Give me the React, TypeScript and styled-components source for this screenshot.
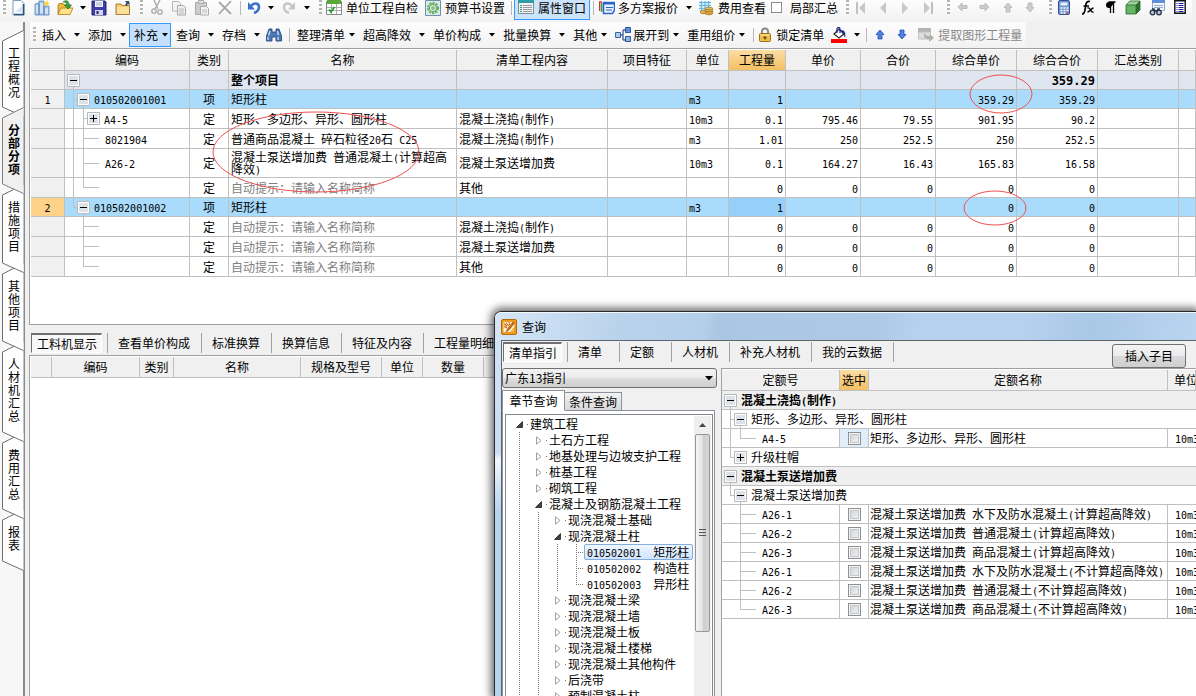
import React from "react";
import styled, { createGlobalStyle, css } from "styled-components";

const LINE = "#c0c0c0";
const SANS = `"Noto Sans CJK SC", "Liberation Sans", sans-serif`;
const MONO = `"DejaVu Sans Mono", "Liberation Mono", monospace`;

const Global = createGlobalStyle`
  *, *::before, *::after { box-sizing: border-box; }
  body { margin: 0; background: #f0f0f0; overflow: hidden; }
  button, select, input { font: inherit; color: inherit; margin: 0; }
  button { border: 0; background: none; padding: 0; text-align: left; white-space: nowrap; }
  svg { display: block; flex: none; }
`;

const Page = styled.div`
  position: relative;
  display: flex;
  flex-direction: column;
  height: 100vh;
  overflow: hidden;
  font: 12px/16px ${SANS};
  color: #000;
`;

/* ---------- text ---------- */

const Half = styled.span<{ $strong?: boolean }>`
  font-family: ${MONO};
  font-size: ${(p) => (p.$strong ? 12 : 10)}px;
  line-height: 0;
  white-space: pre-wrap;
`;

/* Latin runs are set half-width beside the full-width Chinese glyphs. */
function Mixed({ text, strong }: { text: string; strong?: boolean }) {
  return (
    <>
      {text
        .split(/([\x20-\x7e]+)/)
        .filter(Boolean)
        .map((part, i) =>
          /^[\x20-\x7e]/.test(part) ? (
            <Half key={i} $strong={strong}>
              {part}
            </Half>
          ) : (
            <React.Fragment key={i}>{part}</React.Fragment>
          )
        )}
    </>
  );
}

/* ---------- toolbars ---------- */

const ToolbarOne = styled.div`
  display: flex;
  align-items: center;
  height: 22px;
  flex: none;
  padding: 0 0 7px 2px;
  margin-right: 4px;
  background: linear-gradient(#fdfdfd, #f2f2f2);
`;

const ToolbarTwo = styled.div`
  display: flex;
  align-items: center;
  align-self: flex-start;
  height: 26px;
  flex: none;
  padding: 0 4px 1px 3px;
  margin-left: 1px;
  border-radius: 0 3px 3px 0;
  background: linear-gradient(#fdfdfd, #f2f2f2);
`;

const ToolButton = styled.button<{ $ml?: number; $on?: boolean; $off?: boolean }>`
  display: flex;
  align-items: center;
  flex: none;
  height: 24px;
  margin-left: ${(p) => p.$ml ?? 0}px;
  gap: 4px;
  color: ${(p) => (p.$off ? "#888" : "#000")};
  ${(p) =>
    p.$on &&
    css`
      background: #cce4fb;
      border: 1px solid #3399ff;
      padding: 0 3px;
    `}
`;

const Menu = styled.button<{ $split?: boolean; $on?: boolean; $ml?: number }>`
  display: flex;
  align-items: center;
  flex: none;
  height: 24px;
  gap: ${(p) => (p.$split ? 7 : 3)}px;
  padding-right: 8px;
  margin-left: ${(p) => p.$ml ?? 0}px;
  ${(p) =>
    p.$on &&
    css`
      background: #c4e0fc;
      border: 1px solid #3399ff;
      margin: 0 5px 0 -5px;
      padding: 0 2px 0 4px;
    `}
`;

const Sep = styled.span<{ $ml?: number; $tall?: boolean }>`
  flex: none;
  width: 1px;
  height: ${(p) => (p.$tall ? 20 : 14)}px;
  margin-left: ${(p) => p.$ml ?? 0}px;
  background: ${(p) => (p.$tall ? "#a0a0a0" : "#b8b8b8")};
`;

const Grip = styled.span<{ $ml?: number }>`
  flex: none;
  width: 3px;
  height: 15px;
  margin-left: ${(p) => p.$ml ?? 0}px;
  background: repeating-linear-gradient(#b4b4b4 0 2px, transparent 2px 4px);
`;

const TickLabel = styled.label`
  display: flex;
  align-items: center;
  flex: none;
  gap: 8px;
  margin-left: 5px;
`;

const FlatTick = styled.input`
  appearance: none;
  width: 11px;
  height: 11px;
  border: 1px solid #8c8c8c;
  background: #fff;
`;

const Caret = () => (
  <svg width="7" height="4" viewBox="0 0 7 4">
    <path d="M1 0h6L4 3.5z" fill="#000" />
  </svg>
);

const Svg = ({ children, w = 16 }: { children: React.ReactNode; w?: number }) => (
  <svg width={w} height="16" viewBox={`0 0 ${w} 16`} aria-hidden="true">
    {children}
  </svg>
);

const icons = {
  doc: (
    <Svg>
      <path d="M3 .5h8l3 3V15H3z" fill="#fff" stroke="#7c9dbd" />
      <path d="M13.5 4v10.5H4" fill="none" stroke="#28557d" strokeWidth="1.6" />
      <path d="M5 12h7V6z" fill="#d4e4f2" />
    </Svg>
  ),
  building: (
    <Svg>
      <path d="M1 4l4-1v12H1zM5 1h5v14H5zM10 6h5v9h-5z" fill="#a9c6ea" stroke="#5c86bd" strokeWidth=".8" />
      <path d="M2 6h2M2 8h2M2 10h2M2 12h2M6 4h3M6 6h3M6 8h3M6 10h3M6 12h3M11 9h3M11 11h3M11 13h3" stroke="#fff" />
      <path d="M13 0l1 2.5L16 3l-2 1 .5 2.500L12.500 5 10 6l1-2.200L9.500 2l2.500.2z" fill="#ffd23d" />
    </Svg>
  ),
  open: (
    <Svg>
      <path d="M1 14V5l1-1.500h4L7 5h6v9z" fill="#eebb3f" stroke="#a6701a" strokeWidth=".8" />
      <path d="M1 14.500L4 8h12l-3 6.500z" fill="#ffe28a" stroke="#b07a20" strokeWidth=".8" />
      <path d="M6 2c3-2.500 6-1.500 6 3h2.500L11 9 7.500 5H10C9.500 2.500 8 2 6 2z" fill="#38a838" stroke="#176817" strokeWidth=".6" />
    </Svg>
  ),
  save: (
    <Svg>
      <path d="M1 1h13l1 1v13H1z" fill="#3d3dae" stroke="#22226e" />
      <path d="M4 1h8v6H4z" fill="#f3f3fb" />
      <path d="M5 3h6M5 5h6" stroke="#a8a8c8" />
      <path d="M4 10h8v5H4z" fill="#d5d5ea" />
      <path d="M5.500 11h2v3h-2z" fill="#22226e" />
    </Svg>
  ),
  folder: (
    <Svg>
      <path d="M1 14.500V4h5l1 1.500h7.500v9z" fill="#f2cd72" stroke="#9b7430" strokeWidth=".9" />
      <path d="M2 7h12v7H2z" fill="#fbe09a" />
      <path d="M10 1h4l1 4-2-1-1.500 2L10 4.500 11.500 3z" fill="#3b4c68" />
    </Svg>
  ),
  cut: (
    <Svg w={14}>
      <path d="M4 0l4 9M10 0L5 9" stroke="#a9a9a9" strokeWidth="1.400" />
      <circle cx="4" cy="11" r="2.200" fill="none" stroke="#a9a9a9" strokeWidth="1.300" />
      <circle cx="10" cy="12" r="2.200" fill="none" stroke="#a9a9a9" strokeWidth="1.300" />
    </Svg>
  ),
  copy: (
    <Svg>
      <path d="M1.500 1.500h6l2 2V11h-8z" fill="#f4f4f4" stroke="#b4b4b4" />
      <path d="M6.500 5.500h6l2 2V15h-8z" fill="#ededed" stroke="#a8a8a8" />
      <path d="M8 9h5M8 11h5M8 13h5" stroke="#bbb" />
    </Svg>
  ),
  paste: (
    <Svg>
      <path d="M1.500 2.500h11v12h-11z" fill="#ccc" stroke="#aaa" />
      <path d="M4.500.5h5v3h-5z" fill="#e2e2e2" stroke="#aaa" />
      <path d="M6.500 6.500h6l2 2V15h-8z" fill="#f2f2f2" stroke="#aaa" />
      <path d="M8 10h5M8 12h5" stroke="#bbb" />
    </Svg>
  ),
  del: (
    <Svg w={14}>
      <path d="M1 2l12 12M13 1L1 14" stroke="#a6a6a6" strokeWidth="1.800" />
    </Svg>
  ),
  undo: (
    <Svg w={14}>
      <path d="M4 6c3-4 8-3 8 1 0 3-2 5-5 6" fill="none" stroke="#3970c8" strokeWidth="2.600" />
      <path d="M1 2v7.500h7z" fill="#3970c8" />
    </Svg>
  ),
  redo: (
    <Svg w={14}>
      <path d="M10 6C7 2 2 3 2 7c0 3 2 5 5 6" fill="none" stroke="#c6c6c6" strokeWidth="2.400" />
      <path d="M13 2v7.500H6z" fill="#c6c6c6" />
    </Svg>
  ),
  check: (
    <Svg>
      <path d="M.5 1.500h15v13H.5z" fill="#fff" stroke="#888" />
      <path d="M1 0h14v4H1z" fill="#5aa83a" />
      <path d="M1 7.500h14M1 10.500h14M5.500 4v10M10.500 4v10" stroke="#aaa" />
      <path d="M3 9.500l2 2.500 3.500-5" fill="none" stroke="#23a02a" strokeWidth="1.800" />
    </Svg>
  ),
  gear: (
    <Svg>
      <path d="M.5.5h15v15H.5z" fill="#dcebe8" stroke="#6f8fae" />
      <circle cx="8" cy="8" r="5" fill="none" stroke="#5fae5f" strokeWidth="2" strokeDasharray="2.200 1" />
      <circle cx="8" cy="8" r="3.500" fill="#eef8ee" stroke="#4d9d4d" />
      <circle cx="8" cy="8" r="1.300" fill="none" stroke="#4d9d4d" />
    </Svg>
  ),
  props: (
    <Svg>
      <path d="M.5.5h15v13H.5z" fill="#f4f4f4" stroke="#7b8e9e" />
      <path d="M0 0h16v3H0z" fill="#2f9ca6" />
      <path d="M2 5.500h2M2 7.500h2M2 9.500h2M2 11.500h2" stroke="#3f8f5f" />
      <path d="M5 5.500h9M5 7.500h9M5 9.500h9M5 11.500h9" stroke="#9a9a9a" />
    </Svg>
  ),
  plans: (
    <Svg>
      <path d="M.7 2v9M0 2h3" stroke="#e03030" strokeWidth="1.400" />
      <path d="M2.700 3v9" stroke="#2aa84a" strokeWidth="1.400" />
      <path d="M4.500 2.500h11v8l-2 3h-9z" fill="#e8f1ff" stroke="#2c63c9" strokeWidth="1.500" />
      <path d="M4 2h12v2.500H4z" fill="#2c63c9" />
      <path d="M7 7.500h7M7 10h6" stroke="#2c63c9" />
    </Svg>
  ),
  cost: (
    <Svg>
      <path d="M1 1h12v10H1z" fill="#d6eefa" />
      <path d="M1 2.500h12M1 5.500h12M1 8.500h8M3.500 1v10M7 1v9M10.500 1v7" stroke="#6cb8dc" strokeWidth="1.200" />
      <ellipse cx="11" cy="9" rx="4" ry="1.800" fill="#f0c55a" stroke="#9c7022" strokeWidth=".7" />
      <ellipse cx="6" cy="12" rx="4" ry="1.800" fill="#e6b548" stroke="#9c7022" strokeWidth=".7" />
      <ellipse cx="11" cy="11" rx="4" ry="1.800" fill="#e6b548" stroke="#9c7022" strokeWidth=".7" />
      <ellipse cx="11" cy="13" rx="4" ry="1.800" fill="#d9a23a" stroke="#9c7022" strokeWidth=".7" />
    </Svg>
  ),
  first: (
    <Svg w={10}>
      <path d="M1 2v12" stroke="#c0c0c0" strokeWidth="2" />
      <path d="M9 2L3 8l6 6z" fill="#c8c8c8" />
    </Svg>
  ),
  prev: (
    <Svg w={8}>
      <path d="M7 2v12L1 8z" fill="#c8c8c8" />
    </Svg>
  ),
  next: (
    <Svg w={8}>
      <path d="M1 2v12l6-6z" fill="#c8c8c8" />
    </Svg>
  ),
  last: (
    <Svg w={10}>
      <path d="M9 2v12" stroke="#c0c0c0" strokeWidth="2" />
      <path d="M1 2l6 6-6 6z" fill="#c8c8c8" />
    </Svg>
  ),
  calc: (
    <Svg>
      <rect x="2.500" y=".5" width="11" height="14" rx="1.500" fill="#6f94cf" stroke="#31538f" />
      <path d="M4.500 2.500h7v3h-7z" fill="#e9f2ff" />
      <path d="M4.500 8h2M7.500 8h2M10.500 8h2M4.500 10.500h2M7.500 10.500h2M10.500 10.500h2M4.500 13h2M7.500 13h2" stroke="#fff" strokeWidth="1.500" />
      <path d="M10.500 13h2" stroke="#e0503a" strokeWidth="1.500" />
    </Svg>
  ),
  fx: (
    <Svg w={14}>
      <path d="M1 14c2 0 2.500-1 3-4l1-6c.4-2 1.500-3 4-2.500M2.500 6H8" fill="none" stroke="#000" strokeWidth="1.600" />
      <path d="M6.500 8c2-.5 2 0 3 2s1.500 2.500 3 2M12.500 8c-2 0-4 4-6 4" fill="none" stroke="#000" strokeWidth="1.400" />
    </Svg>
  ),
  para: (
    <Svg w={12}>
      <path d="M11 2H5a3 3 0 0 0 0 6h1z" fill="#000" />
      <path d="M6.500 2v11M9.500 2v11M4.500 2h7" stroke="#000" strokeWidth="1.300" />
    </Svg>
  ),
  cube: (
    <Svg>
      <path d="M1 5l4-4h10l-4 4z" fill="#9ad69a" />
      <path d="M1 5h10v9H1z" fill="#66b566" />
      <path d="M11 5l4-4v9l-4 4z" fill="#2f702f" />
      <path d="M1 5h10v9H1zM1 5l4-4h10v9l-4 4M11 5l4-4" fill="none" stroke="#2b632b" strokeWidth=".8" />
    </Svg>
  ),
  find: (
    <Svg>
      <path d="M3.500.5h12v10h-12z" fill="#f3f8ff" stroke="#8fa8cc" />
      <path d="M3 0h13v3H3z" fill="#5f8fd6" />
      <path d="M5 5.500h9M5 7.500h9" stroke="#93acd1" />
      <circle cx="3.500" cy="12.500" r="2.300" fill="#b9c7d8" stroke="#222f45" strokeWidth="1.300" />
      <circle cx="10" cy="12.500" r="2.300" fill="#b9c7d8" stroke="#222f45" strokeWidth="1.300" />
      <path d="M3 9h2l1 2h2l1-2h2" fill="none" stroke="#222f45" strokeWidth="1.500" />
    </Svg>
  ),
  list: (
    <Svg w={12}>
      <path d="M.8.8h10.400v12.400H.8z" fill="#fff" stroke="#111" strokeWidth="1.400" />
      <path d="M2.500 3.500h1M2.500 5.500h1M2.500 7.500h1M2.500 9.500h1M2.500 11.500h1M4.500 3.500h5M4.500 5.500h5M4.500 7.500h5M4.500 9.500h5M4.500 11.500h5" stroke="#1c1c9c" />
    </Svg>
  ),
  binoculars: (
    <Svg>
      <path d="M3 2h3v3h4V2h3l2.500 7v5H10v-4H6v4H.5V9z" fill="#4f79b4" stroke="#294a7c" strokeWidth=".9" />
      <path d="M2.500 8.500L4 4M11.500 4l1 4M2 10v3M12 10v3" stroke="#c9dcf5" strokeWidth="1.300" />
    </Svg>
  ),
  expand: (
    <Svg>
      <path d="M5 8h3M8 3v10M8 3h3M8 13h3" fill="none" stroke="#3f5f94" strokeWidth="1.300" />
      <path d="M.5 5.500h5v5h-5z" fill="#aac8f0" stroke="#3f67a8" />
      <path d="M10.500.5h5v5h-5z" fill="#5e8fd8" stroke="#2f559a" />
      <path d="M10.500 9.500h5v5h-5z" fill="#8fb4e8" stroke="#2f559a" />
    </Svg>
  ),
  lock: (
    <Svg w={14}>
      <path d="M4 7V4.500a3 3 0 0 1 6 0V7" fill="none" stroke="#8c8c8c" strokeWidth="2" />
      <rect x="1.500" y="6.500" width="11" height="8" rx="1" fill="#efbf4a" stroke="#9b6f1b" />
      <path d="M2.500 8h9" stroke="#ffe9a8" />
      <path d="M7 9.500v3M5.500 10.500h3" stroke="#5d400c" strokeWidth="1.300" />
    </Svg>
  ),
  bucket: (
    <Svg>
      <path d="M3 7l5-5 5 5-5 4z" fill="#fff" stroke="#222" strokeWidth="1.200" />
      <path d="M6 6V2a1.500 1.500 0 0 1 3 0v4" fill="none" stroke="#1c1c8c" strokeWidth="1.200" />
      <path d="M10 3c4 0 5 3 4 8-1-3-1.500-4-3-5z" fill="#1c2c9c" />
      <path d="M0 12h16v4H0z" fill="#f00" />
    </Svg>
  ),
  extract: (
    <Svg>
      <path d="M0 1h13v4H0z" fill="#b4b4b4" />
      <path d="M.5 5h12v7H.5z" fill="#dcdcdc" stroke="#c0c0c0" />
      <path d="M6 8c0 3 2 4 5 4v3l5-4-4-4v2c-3 0-4 0-5-3z" fill="#b0b0b0" />
    </Svg>
  ),
};

const ARROWS = {
  left: "M1 5l4-4v2.500h5v3H5V9z",
  right: "M10 5L6 1v2.500H1v3h5V9z",
  up: "M5 1l4 4.500H7V10H3V5.500H1z",
  down: "M5 10L1 5.500h2V1h4v4.500h2z",
};

const Arrow = ({ dir, blue }: { dir: keyof typeof ARROWS; blue?: boolean }) => (
  <svg width="11" height="11" viewBox="0 0 11 11" aria-hidden="true">
    <path d={ARROWS[dir]} fill={blue ? "#4d80e0" : "#ccc"} stroke={blue ? "#2450b0" : "#b2b2b2"} strokeWidth=".8" />
  </svg>
);

function Tool({ icon, ml, label }: { icon: React.ReactNode; ml: number; label: string }) {
  return (
    <ToolButton $ml={ml} aria-label={label}>
      {icon}
    </ToolButton>
  );
}

function TopToolbar() {
  return (
    <ToolbarOne>
      <Grip $ml={1} />
      <Tool icon={icons.doc} ml={4} label="新建" />
      <Tool icon={icons.building} ml={8} label="新建项目" />
      <Tool icon={icons.open} ml={7} label="打开" />
      <Tool icon={<Caret />} ml={6} label="最近文件" />
      <Tool icon={icons.save} ml={5} label="保存" />
      <Tool icon={icons.folder} ml={8} label="目录" />
      <Grip $ml={9} />
      <Tool icon={icons.cut} ml={7} label="剪切" />
      <Tool icon={icons.copy} ml={7} label="复制" />
      <Tool icon={icons.paste} ml={7} label="粘贴" />
      <Tool icon={icons.del} ml={8} label="删除" />
      <Sep $ml={8} />
      <Tool icon={icons.undo} ml={6} label="撤销" />
      <Tool icon={<Caret />} ml={6} label="撤销列表" />
      <Tool icon={icons.redo} ml={8} label="重做" />
      <Tool icon={<Caret />} ml={7} label="重做列表" />
      <Grip $ml={9} />
      <ToolButton $ml={4}>
        {icons.check}单位工程自检
      </ToolButton>
      <ToolButton $ml={7}>
        {icons.gear}预算书设置
      </ToolButton>
      <Sep $ml={6} />
      <ToolButton $ml={2} $on>
        {icons.props}属性窗口
      </ToolButton>
      <Sep $ml={3} />
      <ToolButton $ml={5} aria-label="报价方案">
        {icons.plans}
      </ToolButton>
      <Menu $split $ml={3}>
        多方案报价
        <Caret />
      </Menu>
      <ToolButton $ml={-2}>
        {icons.cost}费用查看
      </ToolButton>
      <TickLabel>
        <FlatTick type="checkbox" />
        局部汇总
      </TickLabel>
      <Grip $ml={8} />
      <Tool icon={icons.first} ml={7} label="第一条" />
      <Tool icon={icons.prev} ml={13} label="上一条" />
      <Tool icon={icons.next} ml={14} label="下一条" />
      <Tool icon={icons.last} ml={14} label="最后一条" />
      <Grip $ml={14} />
      <Tool icon={<Arrow dir="left" />} ml={7} label="升级" />
      <Tool icon={<Arrow dir="right" />} ml={11} label="降级" />
      <Tool icon={<Arrow dir="up" />} ml={13} label="上移" />
      <Tool icon={<Arrow dir="down" />} ml={11} label="下移" />
      <Grip $ml={13} />
      <Tool icon={icons.calc} ml={4} label="计算器" />
      <Tool icon={icons.fx} ml={9} label="公式" />
      <Tool icon={icons.para} ml={9} label="特殊符号" />
      <Tool icon={icons.cube} ml={9} label="图元公式" />
      <Tool icon={icons.find} ml={8} label="查找" />
      <Tool icon={icons.list} ml={9} label="列表" />
    </ToolbarOne>
  );
}

function EditToolbar() {
  return (
    <ToolbarTwo>
      <Grip />
      {["插入", "添加"].map((t, i) => (
        <Menu key={t} $split $ml={i ? 0 : 6}>
          {t}
          <Caret />
        </Menu>
      ))}
      <Menu $on>
        补充
        <Caret />
      </Menu>
      {["查询", "存档"].map((t) => (
        <Menu key={t} $split>
          {t}
          <Caret />
        </Menu>
      ))}
      <Tool icon={icons.binoculars} ml={-2} label="查找" />
      <Sep $ml={7} />
      <Menu $ml={7}>
        整理清单
        <Caret />
      </Menu>
      {["超高降效", "单价构成", "批量换算"].map((t) => (
        <Menu key={t} $split>
          {t}
          <Caret />
        </Menu>
      ))}
      <Menu>
        其他
        <Caret />
      </Menu>
      {icons.expand}
      <Menu $ml={2}>
        展开到
        <Caret />
      </Menu>
      <Menu>
        重用组价
        <Caret />
      </Menu>
      <Sep />
      <ToolButton $ml={4}>
        {icons.lock}锁定清单
      </ToolButton>
      <Tool icon={icons.bucket} ml={7} label="颜色" />
      <Tool icon={<Caret />} ml={6} label="颜色列表" />
      <Sep $ml={6} />
      <Tool icon={<Arrow dir="up" blue />} ml={8} label="上移" />
      <Tool icon={<Arrow dir="down" blue />} ml={11} label="下移" />
      <ToolButton $ml={10} $off>
        {icons.extract}提取图形工程量
      </ToolButton>
    </ToolbarTwo>
  );
}

/* ---------- side tabs ---------- */

const Body = styled.div`
  display: flex;
  flex: 1;
  min-height: 0;
`;

const Side = styled.nav`
  display: flex;
  flex-direction: column;
  flex: none;
  width: 25px;
  margin-right: 4px;
  padding-top: 8px;
  border-right: 2px solid #8a8a8a;
  background: #f7f7f7;
`;

const SideTab = styled.button<{ $h: number; $z: number; $on?: boolean }>`
  display: grid;
  flex: none;
  position: relative;
  z-index: ${(p) => p.$z};
  height: ${(p) => p.$h + 10}px;
  margin-bottom: -10px;
  white-space: normal;
  font-weight: ${(p) => (p.$on ? 700 : 400)};
  > * {
    grid-area: 1 / 1;
  }
`;

const SideText = styled.span`
  width: 12px;
  margin: 16px 0 0 8px;
  line-height: 13px;
  word-break: break-all;
`;

const SIDE: [string, number][] = [
  ["工程概况", 77],
  ["分部分项", 77],
  ["措施项目", 79],
  ["其他项目", 78],
  ["人材机汇总", 91],
  ["费用汇总", 77],
  ["报表", 52],
];

function SideTabs() {
  return (
    <Side>
      {SIDE.map(([name, h], i) => {
        const on = i === 1;
        return (
          <SideTab key={name} $h={h} $z={on ? 9 : 8 - i} $on={on}>
            <svg width="25" height={h + 10} viewBox={`0 0 25 ${h + 10}`}>
              <path
                d={`M23.500 .5L2.500 11V${h}L23.500 ${h + 9.5}`}
                fill={on ? "#f0f0f0" : "#fff"}
                stroke={on ? "#808080" : "#6e6e6e"}
              />
            </svg>
            <SideText>{name}</SideText>
          </SideTab>
        );
      })}
    </Side>
  );
}

/* ---------- tables ---------- */

const Main = styled.main`
  display: flex;
  flex-direction: column;
  flex: 1;
  min-width: 0;
`;

const GridFrame = styled.section<{ $grow?: boolean }>`
  position: relative;
  flex: ${(p) => (p.$grow ? 1 : "none")};
  min-height: 0;
  padding: 1px 0 ${(p) => (p.$grow ? 0 : 47)}px 1px;
  border: 1px solid #a0a0a0;
  border-right: 0;
  border-bottom-width: ${(p) => (p.$grow ? 0 : 1)}px;
  background: #fff;
`;

const Table = styled.table`
  width: 100%;
  table-layout: fixed;
  border-collapse: separate;
  border-spacing: 0;
`;

const Th = styled.th<{ $hot?: boolean }>`
  height: 21px;
  padding: 0;
  overflow: hidden;
  font-weight: 400;
  white-space: nowrap;
  border: solid ${LINE};
  border-width: 0 1px 1px 0;
  background: ${(p) => (p.$hot ? "linear-gradient(#fbdda5, #f3bf62)" : "#f0f0f0")};
`;

type Tone = "total" | "item" | "plain";
const TONES: Record<Tone, string> = { total: "#dfe6f0", item: "#a8dbfc", plain: "#fff" };

const Tr = styled.tr<{ $tone: Tone; $h: number }>`
  height: ${(p) => p.$h}px;
  background: ${(p) => TONES[p.$tone]};
  font-weight: ${(p) => (p.$tone === "total" ? 700 : 400)};
`;

const Td = styled.td<{ $align?: string; $hint?: boolean; $bg?: string; $wide?: boolean }>`
  padding: 0 ${(p) => (p.$align === "right" ? 2 : 0)}px 0 ${(p) => (p.$align ? 0 : 2)}px;
  line-height: 12px;
  text-align: ${(p) => p.$align ?? "left"};
  color: ${(p) => (p.$hint ? "#808080" : "inherit")};
  background: ${(p) => p.$bg ?? "transparent"};
  border: solid ${LINE};
  border-width: 0 ${(p) => (p.$wide ? 0 : 1)}px 1px 0;
`;

const TreeTd = styled(Td)`
  padding-left: 2px;
`;

/* ---------- tree cell shared by both tables ---------- */

const Branch = styled.div<{ $h: number }>`
  display: flex;
  align-items: center;
  height: ${(p) => p.$h - 1}px;
  white-space: nowrap;
`;

type Slot = "none" | "line" | "tee" | "end";
const v = `linear-gradient(${LINE}, ${LINE})`;

const Guide = styled.span<{ $kind: Slot }>`
  flex: none;
  align-self: stretch;
  width: 10px;
  background-repeat: no-repeat;
  background-image: ${(p) => (p.$kind === "none" ? "none" : p.$kind === "line" ? v : `${v}, ${v}`)};
  background-size: 1px ${(p) => (p.$kind === "end" ? "50%" : "100%")}, 4px 1px;
  background-position: 6px 0, 6px 50%;
`;

const Stem = styled.span`
  flex: none;
  width: 12px;
  height: 1px;
  margin-right: 6px;
  background: ${LINE};
`;

const Knob = styled.span<{ $down?: boolean }>`
  display: flex;
  align-items: center;
  flex: none;
  align-self: stretch;
  width: 13px;
  margin-right: 4px;
  background: ${(p) => (p.$down ? v : "none")} no-repeat 6px 100% / 1px 50%;
`;

function Expander({ sign }: { sign: "+" | "-" }) {
  return (
    <Knob $down={sign === "-"}>
      <button aria-label={sign === "+" ? "展开" : "折叠"}>
        <svg width="13" height="13" viewBox="0 0 13 13">
          <path d="M.5.5h12v12H.5z" fill="#fff" stroke="#b8b8b8" />
          <path d="M2 2h9v9H2z" fill="#dde1e8" />
          <path d={sign === "+" ? "M3 6.500h7M6.500 3v7" : "M3 6.500h7"} stroke="#000" />
        </svg>
      </button>
    </Knob>
  );
}

function Tree({ h, guides, sign, text }: { h: number; guides: Slot[]; sign?: "+" | "-"; text: string }) {
  return (
    <Branch $h={h}>
      {guides.map((g, i) => (
        <Guide key={i} $kind={g} />
      ))}
      {sign ? <Expander sign={sign} /> : <Stem />}
      <span>
        <Mixed text={text} />
      </span>
    </Branch>
  );
}

/* ---------- bill of quantities ---------- */

const COLS: [string, number?][] = [
  ["", 34], ["编码", 125], ["类别", 39], ["名称", 228], ["清单工程内容", 151], ["项目特征", 79], ["单位", 42],
  ["工程量", 57], ["单价", 75], ["合价", 75], ["综合单价", 81], ["综合合价", 81], ["汇总类别", 81], [""],
];

type Row = {
  h: number; tone: Tone; no?: string; guides: Slot[]; sign?: "+" | "-"; code: string; kind: string;
  name: string; work: string; unit: string; nums: string[]; active?: boolean;
};

const HINT = "自动提示：请输入名称简称";
const ZERO = ["0", "0", "0", "0", "0"];

const ROWS: Row[] = [
  { h: 19, tone: "total", guides: [], sign: "-", code: "", kind: "", name: "整个项目", work: "", unit: "", nums: ["", "", "", "", "359.29"] },
  { h: 19, tone: "item", no: "1", guides: ["tee"], sign: "-", code: "010502001001", kind: "项", name: "矩形柱", work: "", unit: "m3", nums: ["1", "", "", "359.29", "359.29"] },
  { h: 20, tone: "plain", guides: ["line", "tee"], sign: "+", code: "A4-5", kind: "定", name: "矩形、多边形、异形、圆形柱", work: "混凝土浇捣(制作)", unit: "10m3", nums: ["0.1", "795.46", "79.55", "901.95", "90.2"] },
  { h: 20, tone: "plain", guides: ["line", "tee"], code: "8021904", kind: "定", name: "普通商品混凝土 碎石粒径20石 C25", work: "混凝土浇捣(制作)", unit: "m3", nums: ["1.01", "250", "252.5", "250", "252.5"] },
  { h: 29, tone: "plain", guides: ["line", "tee"], code: "A26-2", kind: "定", name: "混凝土泵送增加费 普通混凝土(计算超高降效)", work: "混凝土泵送增加费", unit: "10m3", nums: ["0.1", "164.27", "16.43", "165.83", "16.58"] },
  { h: 20, tone: "plain", guides: ["line", "end"], code: "", kind: "定", name: HINT, work: "其他", unit: "", nums: ZERO },
  { h: 19, tone: "item", no: "2", guides: ["end"], sign: "-", code: "010502001002", kind: "项", name: "矩形柱", work: "", unit: "m3", nums: ["1", "", "", "0", "0"], active: true },
  { h: 20, tone: "plain", guides: ["none", "tee"], code: "", kind: "定", name: HINT, work: "混凝土浇捣(制作)", unit: "", nums: ZERO },
  { h: 20, tone: "plain", guides: ["none", "tee"], code: "", kind: "定", name: HINT, work: "混凝土泵送增加费", unit: "", nums: ZERO },
  { h: 20, tone: "plain", guides: ["none", "end"], code: "", kind: "定", name: HINT, work: "其他", unit: "", nums: ZERO },
];

const Marks = styled.svg`
  position: absolute;
  left: 0;
  top: 0;
  pointer-events: none;
`;

function BillGrid() {
  return (
    <GridFrame>
      <Table>
        <colgroup>
          {COLS.map(([, w], i) => (
            <col key={i} width={w} />
          ))}
        </colgroup>
        <thead>
          <tr>
            {COLS.map(([t], i) => (
              <Th key={i} $hot={t === "工程量"}>
                {t}
              </Th>
            ))}
          </tr>
        </thead>
        <tbody>
          {ROWS.map((r, i) => (
            <Tr key={i} $tone={r.tone} $h={r.h}>
              <Td $align="center" $bg={r.active ? "#ffd28a" : "#f0f0f0"}>
                <Mixed text={r.no ?? ""} />
              </Td>
              <TreeTd>
                <Tree h={r.h} guides={r.guides} sign={r.sign} text={r.code} />
              </TreeTd>
              <Td $align="center">{r.kind}</Td>
              <Td $hint={r.name === HINT}>
                <Mixed text={r.name} />
              </Td>
              <Td>
                <Mixed text={r.work} />
              </Td>
              <Td />
              <Td>
                <Mixed text={r.unit} />
              </Td>
              {r.nums.map((n, k) => (
                <Td key={k} $align="right" $bg={r.active && k === 0 ? "#96cffa" : undefined}>
                  <Mixed text={n} strong={r.tone === "total"} />
                </Td>
              ))}
              <Td />
              <Td />
            </Tr>
          ))}
        </tbody>
      </Table>
      <Marks width="1020" height="190" viewBox="0 0 1020 190" fill="none" stroke="#f05050">
        <ellipse cx="286" cy="103" rx="103" ry="40" />
        <ellipse cx="971" cy="45" rx="31" ry="19" />
        <ellipse cx="965" cy="159" rx="31" ry="17" />
      </Marks>
    </GridFrame>
  );
}

/* ---------- flat tab strips ---------- */

const Strip = styled.div<{ $pad: string }>`
  display: flex;
  flex: none;
  align-items: center;
  padding: ${(p) => p.$pad};
`;

const StripTab = styled.button<{ $on?: boolean }>`
  flex: none;
  min-width: 52px;
  height: 20px;
  line-height: 18px;
  ${(p) =>
    p.$on
      ? css`
          padding: 1px 4px 0 5px;
          margin-right: 5px;
          border: 1px solid #fff;
          border-top: 2px solid #707070;
          border-left: 1px solid #707070;
          line-height: 16px;
          background: #f8f8f8;
        `
      : css`
          padding: 0 11px 0 10px;
        `}
  & + & {
    border-left: 1px solid #a0a0a0;
  }
`;

const LOWER: [string, number?][] = [
  ["", 21], ["编码", 88], ["类别", 34], ["名称", 127], ["规格及型号", 81], ["单位", 41], ["数量", 61], [""],
];

function LowerPane() {
  return (
    <>
      <Strip $pad="8px 0 2px 2px">
        {["工料机显示", "查看单价构成", "标准换算", "换算信息", "特征及内容", "工程量明细"].map((t, i) => (
          <StripTab key={t} $on={i === 0}>
            {t}
          </StripTab>
        ))}
      </Strip>
      <GridFrame $grow>
        <Table>
          <colgroup>
            {LOWER.map(([, w], i) => (
              <col key={i} width={w} />
            ))}
          </colgroup>
          <thead>
            <tr>
              {LOWER.map(([t], i) => (
                <Th key={i}>{t}</Th>
              ))}
            </tr>
          </thead>
        </Table>
      </GridFrame>
    </>
  );
}

/* ---------- query window ---------- */

const Win = styled.section`
  position: absolute;
  z-index: 20;
  left: 494px;
  right: 0;
  top: 311px;
  bottom: 0;
  display: flex;
  flex-direction: column;
  padding-left: 6px;
  border: solid #26282b;
  border-width: 1px 0 0 1px;
  border-radius: 7px 0 0 0;
  background: linear-gradient(#d3e4f5, #c9dcf2 140px, #f0f6fc 148px, #b7d3ee 200px);
  box-shadow: 0 0 9px 3px rgba(0, 0, 0, 0.6);
`;

const Title = styled.header`
  display: flex;
  align-items: center;
  flex: none;
  gap: 5px;
  height: 28px;
  margin-left: -6px;
  padding-left: 6px;
  border-top: 1px solid #f2f8fe;
  border-radius: 6px 0 0 0;
  background: linear-gradient(100deg, #d6e6f6, #b9d2ec 18%, #b4cfea 30%, #a9c6e2 32%, #adc9e5 55%, #b5d1ee 60%, #b5d1ee 75%, #a9c8e6 85%, #b9d5f0);
`;

const Client = styled.div`
  display: flex;
  flex-direction: column;
  flex: 1;
  min-height: 0;
  border: solid #5c6570;
  border-width: 1px 0 0 1px;
  background: #f0f0f0;
`;

const TopRow = styled.div`
  display: flex;
  flex: none;
  height: 27px;
`;

const RoundButton = styled.button`
  align-self: flex-end;
  margin-left: auto;
  margin-right: 10px;
  height: 24px;
  width: 74px;
  text-align: center;
  border: 1px solid #707070;
  border-radius: 3px;
  background: linear-gradient(#f4f4f4, #ebebeb 50%, #dadada 50%, #cfcfcf);
`;

const Panes = styled.div`
  display: flex;
  flex: 1;
  min-height: 0;
  gap: 4px;
`;

const LeftPane = styled.div`
  display: flex;
  flex-direction: column;
  flex: none;
  width: 215px;
`;

const Picker = styled.div`
  display: grid;
  align-items: center;
  flex: none;
  > * {
    grid-area: 1 / 1;
  }
  > svg {
    justify-self: end;
    margin-right: 4px;
    pointer-events: none;
  }
`;

const Select = styled.select`
  appearance: none;
  width: 100%;
  height: 20px;
  padding: 0 2px;
  border: 1px solid #707070;
  border-radius: 3px;
  background: linear-gradient(#f2f2f2, #ebebeb 50%, #dddddd 50%, #cfcfcf);
`;

const PageTabs = styled.div`
  display: flex;
  align-items: flex-end;
  flex: none;
  height: 23px;
  margin-bottom: -1px;
  position: relative;
`;

const PageTab = styled.button<{ $on?: boolean }>`
  height: ${(p) => (p.$on ? 21 : 19)}px;
  width: ${(p) => (p.$on ? 63 : 57)}px;
  text-align: center;
  border: 1px solid #8d919c;
  border-bottom-color: ${(p) => (p.$on ? "#fff" : "#8d919c")};
  border-left-width: ${(p) => (p.$on ? 1 : 0)}px;
  background: ${(p) => (p.$on ? "#fff" : "linear-gradient(#f2f2f2, #d8d8d8)")};
`;

const TabBody = styled.div`
  display: flex;
  flex: 1;
  min-height: 0;
  width: 213px;
  padding: 3px 1px 0 2px;
  border: 1px solid #8d919c;
  border-bottom: 0;
  background: #fff;
`;

const TreeFrame = styled.div`
  display: flex;
  flex: 1;
  min-width: 0;
  border: 1px solid #828790;
  border-bottom: 0;
`;

const TreeList = styled.div`
  flex: 1;
  min-width: 0;
  padding: 1px 0 0 5px;
  overflow: hidden;
`;

const TreeRow = styled.div`
  display: flex;
  align-items: center;
  height: 16px;
  white-space: nowrap;
`;

const dots = "repeating-linear-gradient(#777 0 1px, transparent 1px 2px)";
const hdots = "repeating-linear-gradient(90deg, #777 0 1px, transparent 1px 2px)";
const dot = "linear-gradient(#777, #777)";

const Indent = styled.span<{ $kind: "line" | "tee" | "end" | "knob" }>`
  display: flex;
  align-items: center;
  flex: none;
  align-self: stretch;
  width: 19px;
  padding-left: 5px;
  background-repeat: no-repeat;
  background-image: ${(p) => (p.$kind === "line" ? dots : p.$kind === "knob" ? dot : `${dots}, ${hdots}`)};
  background-size: ${(p) => (p.$kind === "knob" ? "1px 1px" : `1px ${p.$kind === "end" ? "50%" : "100%"}, 8px 1px`)};
  background-position: ${(p) => (p.$kind === "knob" ? "16px 50%" : "8px 0, 8px 50%")};
`;

const NodeText = styled.button<{ $on?: boolean }>`
  height: 16px;
  line-height: 16px;
  white-space: pre;
  ${(p) =>
    p.$on &&
    css`
      margin-left: -3px;
      padding: 0 3px 0 2px;
      line-height: 14px;
      border: 1px solid #84acdd;
      border-radius: 2px;
      background: linear-gradient(#f0f7ff, #cfe4fd);
    `}
`;

type Node = { level: number; text: string; mark: "open" | "closed" | "tee" | "end"; on?: boolean };

const NODES: Node[] = [
  { level: 0, text: "建筑工程", mark: "open" },
  { level: 1, text: "土石方工程", mark: "closed" },
  { level: 1, text: "地基处理与边坡支护工程", mark: "closed" },
  { level: 1, text: "桩基工程", mark: "closed" },
  { level: 1, text: "砌筑工程", mark: "closed" },
  { level: 1, text: "混凝土及钢筋混凝土工程", mark: "open" },
  { level: 2, text: "现浇混凝土基础", mark: "closed" },
  { level: 2, text: "现浇混凝土柱", mark: "open" },
  { level: 3, text: "010502001  矩形柱", mark: "tee", on: true },
  { level: 3, text: "010502002  构造柱", mark: "tee" },
  { level: 3, text: "010502003  异形柱", mark: "end" },
  { level: 2, text: "现浇混凝土梁", mark: "closed" },
  { level: 2, text: "现浇混凝土墙", mark: "closed" },
  { level: 2, text: "现浇混凝土板", mark: "closed" },
  { level: 2, text: "现浇混凝土楼梯", mark: "closed" },
  { level: 2, text: "现浇混凝土其他构件", mark: "closed" },
  { level: 2, text: "后浇带", mark: "closed" },
  { level: 2, text: "预制混凝土柱", mark: "closed" },
];

const ScrollBar = styled.div`
  display: flex;
  flex-direction: column;
  flex: none;
  width: 17px;
  margin: 1px 1px 0 0;
  background: #efefef;
`;

const ScrollUp = styled.button`
  display: grid;
  place-items: center;
  height: 18px;
`;

const Thumb = styled.div`
  display: grid;
  place-items: center;
  width: 15px;
  margin-left: 1px;
  height: 198px;
  border: 1px solid #979797;
  border-radius: 2px;
  background: linear-gradient(90deg, #f5f5f5, #e2e2e2 50%, #cdcdcd 52%, #d6d6d6);
`;

const RightPane = styled.div`
  flex: 1;
  min-width: 0;
  overflow: hidden;
  border: solid #a0a0a0;
  border-width: 1px 0 0 1px;
  padding-top: 1px;
  background: #fff;
`;

const GroupRow = styled.tr<{ $head?: boolean }>`
  height: 19px;
  background: ${(p) => (p.$head ? "#efefef" : "#fff")};
  font-weight: ${(p) => (p.$head ? 700 : 400)};
`;

const BoxTick = styled.input`
  appearance: none;
  display: block;
  width: 13px;
  height: 13px;
  margin: 0 auto;
  border: 1px solid #8e8f8f;
  background: linear-gradient(135deg, #cbcfd5, #f6f6f6) padding-box;
  box-shadow: inset 0 0 0 1px #f4f4f4, inset 0 0 0 2px #c4c8ce;
`;

type Quota = { guides: Slot[]; sign?: "+" | "-"; code: string; head?: boolean; name?: string; hot?: boolean };

const P = "混凝土泵送增加费 ";
const leaf = (code: string, name: string, last?: boolean): Quota => ({ guides: ["none", last ? "end" : "tee"], code, name: P + name });

const QUOTAS: Quota[] = [
  { guides: [], sign: "-", code: "混凝土浇捣(制作)", head: true },
  { guides: ["tee"], sign: "-", code: "矩形、多边形、异形、圆形柱" },
  { guides: ["line", "end"], code: "A4-5", name: "矩形、多边形、异形、圆形柱", hot: true },
  { guides: ["end"], sign: "+", code: "升级柱帽" },
  { guides: [], sign: "-", code: "混凝土泵送增加费", head: true },
  { guides: ["end"], sign: "-", code: "混凝土泵送增加费" },
  leaf("A26-1", "水下及防水混凝土(计算超高降效)"),
  leaf("A26-2", "普通混凝土(计算超高降效)"),
  leaf("A26-3", "商品混凝土(计算超高降效)"),
  leaf("A26-1", "水下及防水混凝土(不计算超高降效)"),
  leaf("A26-2", "普通混凝土(不计算超高降效)"),
  leaf("A26-3", "商品混凝土(不计算超高降效)", true),
];

const UnitTd = styled(Td)`
  padding-left: 7px;
  white-space: nowrap;
`;

const NameTd = styled(Td)`
  padding-left: 1px;
  white-space: nowrap;
`;

const UnitTh = styled(Th)`
  text-align: left;
  padding-left: 6px;
`;

function QueryWindow() {
  return (
    <Win>
      <Title>
        <Svg>
          <rect x=".5" y=".5" width="15" height="15" rx="1.500" fill="#f29a1c" stroke="#b46a0c" />
          <path d="M2.500 3h8l3 2-1 8h-10z" fill="#fff4d8" />
          <path d="M3 4.500l3 3M5 3.500l2.500 3.500M3 7.500l3 1.500M8 3l.5 3" stroke="#c8661a" strokeWidth="1.100" />
          <path d="M5 13l2-4 5-6 1.500 1-5 6.500z" fill="#d2741a" stroke="#8c420a" strokeWidth=".6" />
          <path d="M9 13h4V8z" fill="#f6b648" />
        </Svg>
        查询
      </Title>
      <Client>
        <TopRow>
          <Strip $pad="0 0 6px 1px">
            {["清单指引", "清单", "定额", "人材机", "补充人材机", "我的云数据"].map((t, i) => (
              <StripTab key={t} $on={i === 0}>
                {t}
              </StripTab>
            ))}
            <Sep $tall />
          </Strip>
          <RoundButton>插入子目</RoundButton>
        </TopRow>
        <Panes>
          <LeftPane>
            <Picker>
              <Select aria-label="指引">
                <option>广东13指引</option>
              </Select>
              <svg width="8" height="5" viewBox="0 0 8 5">
                <path d="M0 0h8L4 4.500z" />
              </svg>
            </Picker>
            <PageTabs>
              <PageTab $on>章节查询</PageTab>
              <PageTab>条件查询</PageTab>
            </PageTabs>
            <TabBody>
              <TreeFrame>
                <TreeList>
                  {NODES.map((n) => (
                    <TreeRow key={n.text}>
                      {Array.from({ length: n.level }, (_, i) => (
                        <Indent key={i} $kind="line" />
                      ))}
                      <Indent $kind={n.mark === "open" || n.mark === "closed" ? "knob" : n.mark}>
                        {n.mark === "open" && (
                          <svg width="7" height="7" viewBox="0 0 7 7">
                            <path d="M6.500 .5v6h-6z" fill="#404040" stroke="#222" strokeWidth=".8" />
                          </svg>
                        )}
                        {n.mark === "closed" && (
                          <svg width="7" height="9" viewBox="0 0 7 9">
                            <path d="M1.500 .8v7.400L6 4.500z" fill="#fff" stroke="#a0a0a0" />
                          </svg>
                        )}
                      </Indent>
                      <NodeText $on={n.on}>
                        <Mixed text={n.text} />
                      </NodeText>
                    </TreeRow>
                  ))}
                </TreeList>
                <ScrollBar>
                  <ScrollUp aria-label="向上滚动">
                    <svg width="7" height="4" viewBox="0 0 7 4">
                      <path d="M0 4h7L3.500 0z" fill="#444" />
                    </svg>
                  </ScrollUp>
                  <Thumb>
                    <svg width="7" height="8" viewBox="0 0 7 8">
                      <path d="M0 .5h7M0 3.500h7M0 6.500h7" stroke="#555" />
                    </svg>
                  </Thumb>
                </ScrollBar>
              </TreeFrame>
            </TabBody>
          </LeftPane>
          <RightPane>
            <Table>
              <colgroup>
                <col width="118" />
                <col width="29" />
                <col width="299" />
                <col />
              </colgroup>
              <thead>
                <tr>
                  <Th>定额号</Th>
                  <Th $hot>选中</Th>
                  <Th>定额名称</Th>
                  <UnitTh>单位</UnitTh>
                </tr>
              </thead>
              <tbody>
                {QUOTAS.map((q, i) => {
                  const tree = <Tree h={19} guides={q.guides} sign={q.sign} text={q.code} />;
                  return (
                    <GroupRow key={i} $head={q.head}>
                      {q.name ? (
                        <>
                          <TreeTd>{tree}</TreeTd>
                          <Td $align="center" $bg={q.hot ? "#e0eefc" : undefined}>
                            <BoxTick type="checkbox" aria-label={`选中 ${q.code}`} />
                          </Td>
                          <NameTd>
                            <Mixed text={q.name} />
                          </NameTd>
                          <UnitTd $wide>
                            <Mixed text="10m3" />
                          </UnitTd>
                        </>
                      ) : (
                        <TreeTd colSpan={4} $wide>
                          {tree}
                        </TreeTd>
                      )}
                    </GroupRow>
                  );
                })}
              </tbody>
            </Table>
          </RightPane>
        </Panes>
      </Client>
    </Win>
  );
}

export default function App() {
  return (
    <Page>
      <Global />
      <TopToolbar />
      <Body>
        <SideTabs />
        <Main>
          <EditToolbar />
          <BillGrid />
          <LowerPane />
        </Main>
      </Body>
      <QueryWindow />
    </Page>
  );
}
